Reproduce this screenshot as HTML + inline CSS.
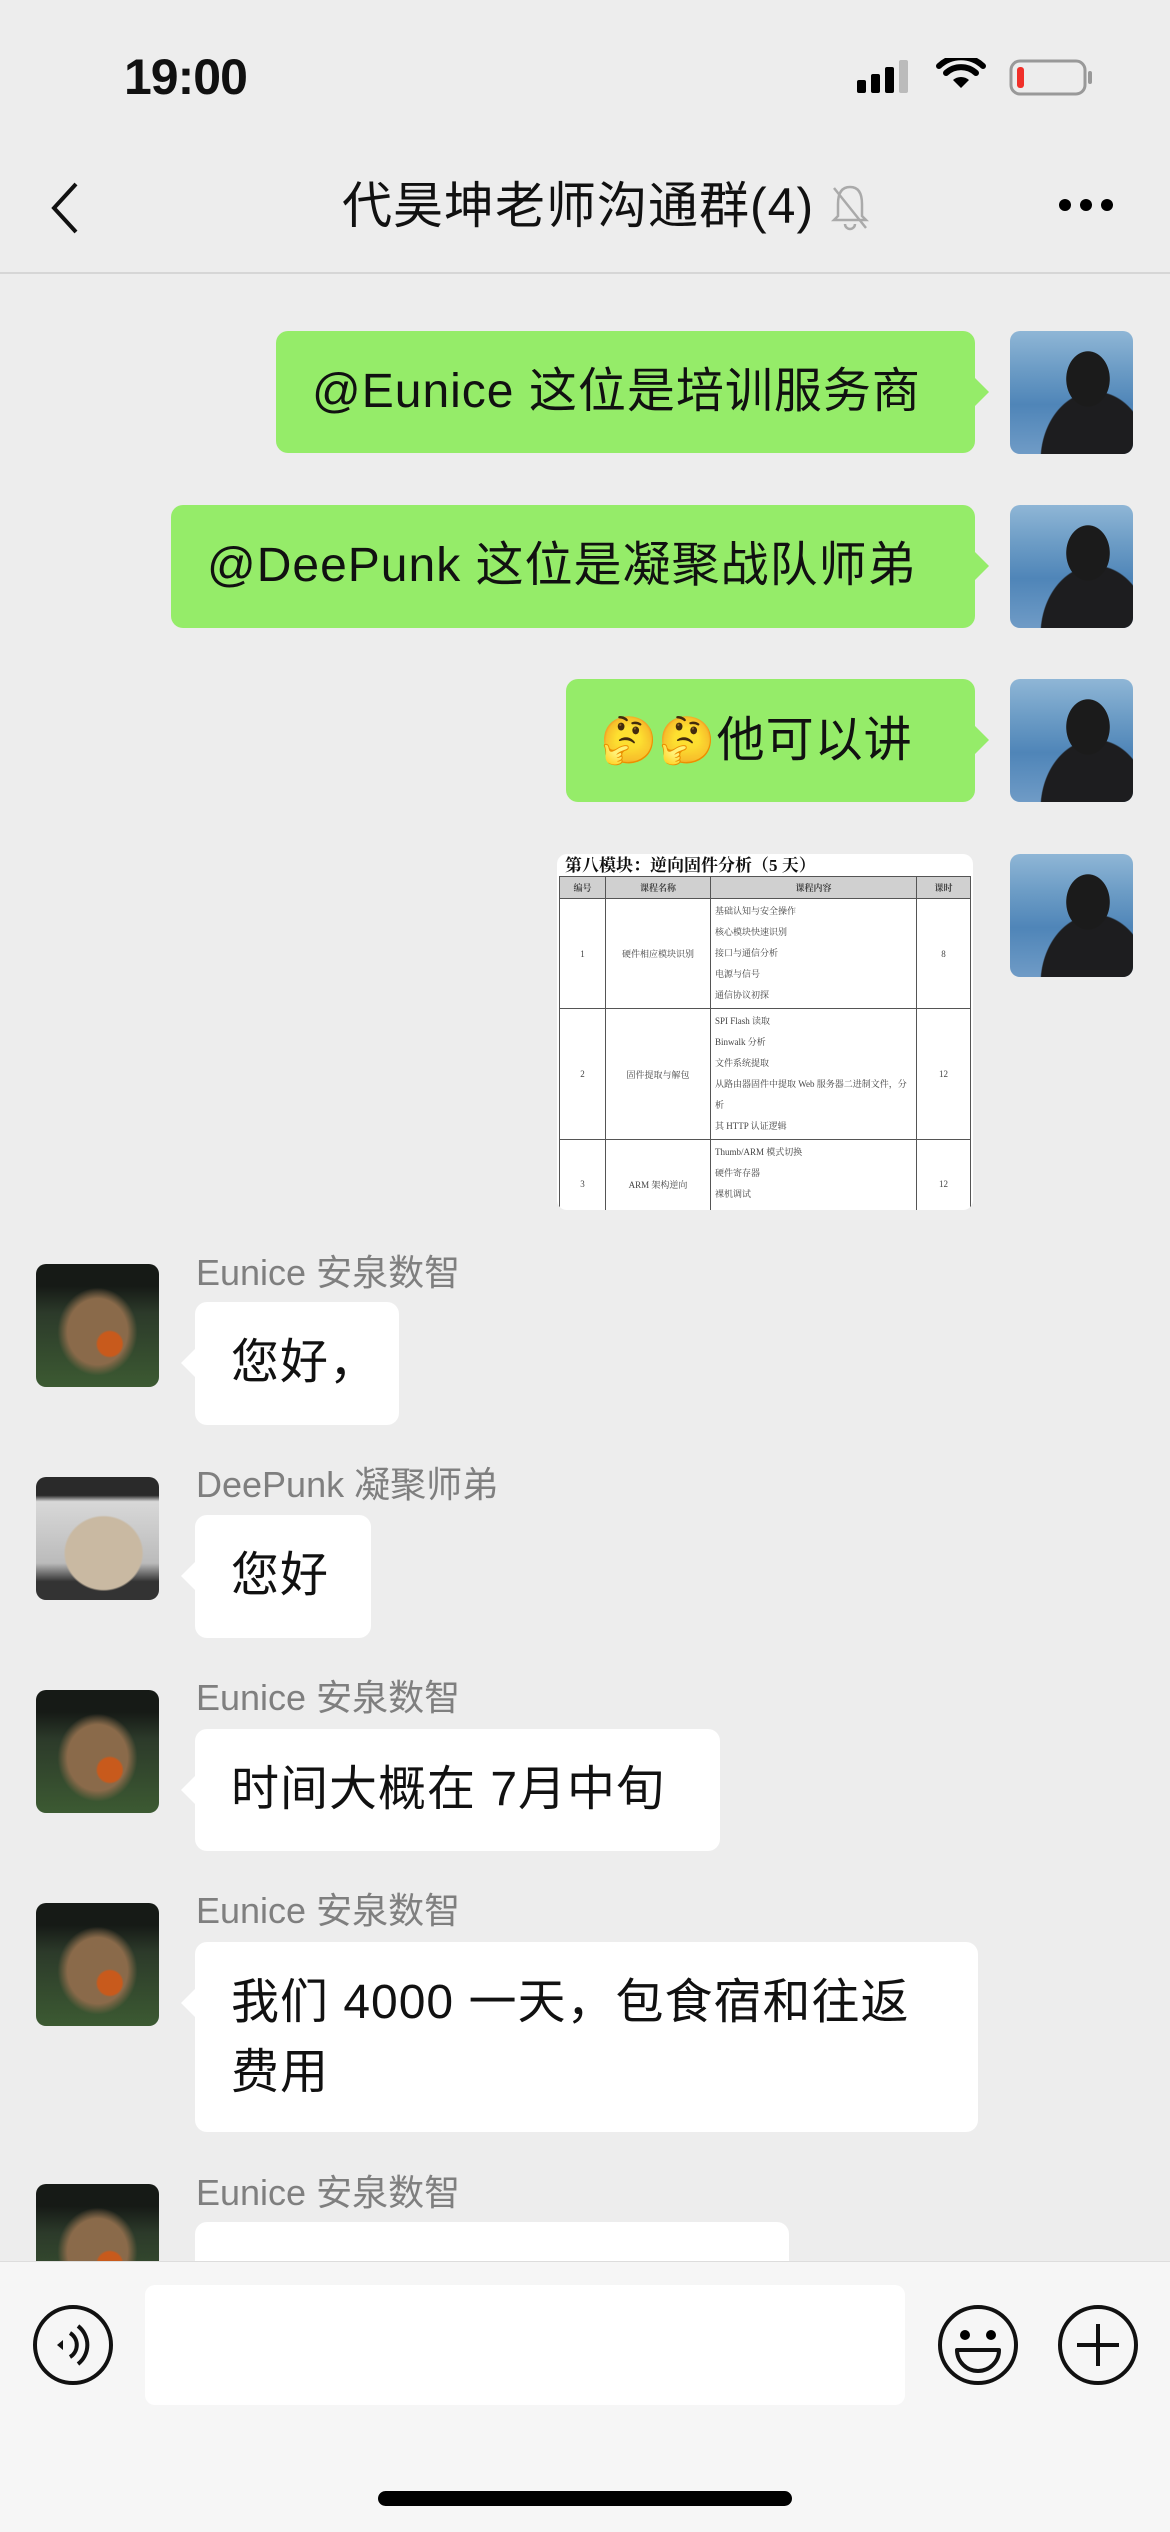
<!DOCTYPE html>
<html><head><meta charset="utf-8"><style>
*{margin:0;padding:0;box-sizing:border-box}
body{width:1170px;height:2532px;background:#ededed;font-family:"Liberation Sans","Noto Sans CJK SC",sans-serif;position:relative;overflow:hidden;color:#111}
.abs{position:absolute}
.b{position:absolute;border-radius:12px;font-size:48px;line-height:70px;padding:26px 36px 26px 36px;white-space:nowrap;letter-spacing:1px}
.g{background:#95ec69}
.w{background:#fff}
.g:after{content:"";position:absolute;right:-14px;top:47px;border:14px solid transparent;border-right:0;border-left-color:#95ec69}
.w:before{content:"";position:absolute;left:-14px;top:47px;border:14px solid transparent;border-left:0;border-right-color:#fff}
.me{position:absolute;left:1010px;width:123px;height:123px;border-radius:10px;overflow:hidden;background:linear-gradient(180deg,#8fb6d6 0%,#6d9dc6 30%,#4f85b8 60%,#6f9bc6 100%)}
.me:after{content:"";position:absolute;left:30px;top:20px;width:95px;height:110px;background:radial-gradient(ellipse 22px 28px at 48px 28px,#1b1b1b 98%,transparent 100%),radial-gradient(ellipse 55px 70px at 55px 110px,#1d1d1f 98%,transparent 100%)}
.eu{position:absolute;left:36px;width:123px;height:123px;border-radius:10px;overflow:hidden;background:radial-gradient(circle at 60% 65%,#c85a1c 0 12px,transparent 14px),radial-gradient(ellipse at 50% 55%,#8a6a4a 0 30px,transparent 40px),linear-gradient(180deg,#161a16 0 18%,#2c3a2a 40%,#3c5a32 100%)}
.cat{position:absolute;left:36px;width:123px;height:123px;border-radius:10px;overflow:hidden;background:radial-gradient(ellipse 40px 38px at 55% 62%,#c9b9a2 95%,transparent 100%),linear-gradient(180deg,#2a2a2a 0 15%,#d8d8d8 20%,#bbb 70%,#333 85%)}
.nm{position:absolute;left:196px;font-size:36px;color:#7f7f7f;line-height:40px}
table{border-collapse:collapse;font-size:9px;color:#444;font-family:"Liberation Serif","Noto Serif CJK SC",serif}
td,th{border:1px solid #555;padding:2px 4px;text-align:center}
th{background:#d0d0d0;height:22px}
td.l{text-align:left;line-height:21px}
</style></head><body>
<div class="abs" style="left:124px;top:48px;font-size:50px;font-weight:bold;letter-spacing:-1px">19:00</div>
<svg class="abs" style="left:855px;top:58px" width="240" height="40">
<rect x="2" y="22" width="9" height="13" rx="2"/><rect x="16" y="16" width="9" height="19" rx="2"/><rect x="30" y="9" width="9" height="26" rx="2"/><rect x="44" y="2" width="9" height="33" rx="2" fill="#bbb"/>
<path d="M106 30 L98 22 A12 12 0 0 1 114 22 Z" /><path d="M91 15 A22 22 0 0 1 121 15" stroke="#000" stroke-width="6" fill="none" stroke-linecap="round"/><path d="M84 8 A32 32 0 0 1 128 8" stroke="#000" stroke-width="6" fill="none" stroke-linecap="round"/>
<rect x="156" y="3" width="74" height="33" rx="9" fill="none" stroke="#999" stroke-width="3"/><rect x="162" y="9" width="7" height="21" rx="3" fill="#f0302a"/><rect x="233" y="13" width="4" height="13" rx="2" fill="#999"/>
</svg>
<svg class="abs" style="left:46px;top:180px" width="40" height="56"><path d="M30 4 L8 28 L30 52" stroke="#111" stroke-width="4" fill="none"/></svg>
<div class="abs" style="left:342px;top:176px;font-size:50px;line-height:60px;letter-spacing:1px">代昊坤老师沟通群(4)</div>
<svg class="abs" style="left:830px;top:182px" width="40" height="50"><path d="M20 5 C10 5 8 14 8 22 L8 34 L4 38 L36 38 L32 34 L32 22 C32 14 30 5 20 5 Z M15 42 A5 5 0 0 0 25 42 M4 6 L36 46" stroke="#aaa" stroke-width="2.5" fill="none"/></svg>
<svg class="abs" style="left:1058px;top:197px" width="56" height="16"><circle cx="7" cy="8" r="6"/><circle cx="28" cy="8" r="6"/><circle cx="49" cy="8" r="6"/></svg>
<div class="abs" style="left:0;top:272px;width:1170px;height:2px;background:#d6d6d6"></div>

<div class="b g" style="left:276px;top:331px;width:699px;height:122px">@Eunice 这位是培训服务商</div>
<div class="me" style="top:331px"></div>
<div class="b g" style="left:171px;top:505px;width:804px;height:123px">@DeePunk 这位是凝聚战队师弟</div>
<div class="me" style="top:505px"></div>
<div class="b g" style="left:566px;top:679px;width:409px;height:123px;padding-left:34px"><span style="font-size:46px">🤔🤔</span>他可以讲</div>
<div class="me" style="top:679px"></div>

<div class="abs" style="left:557px;top:854px;width:416px;height:356px;background:#fff;border-radius:10px;overflow:hidden">
<div style="font-size:17px;font-weight:bold;padding:2px 8px;font-family:'Liberation Serif','Noto Serif CJK SC',serif;height:22px;line-height:20px">第八模块：逆向固件分析（5 天）</div>
<table style="width:412px;margin-left:2px">
<tr><th style="width:46px">编号</th><th style="width:105px">课程名称</th><th>课程内容</th><th style="width:54px">课时</th></tr>
<tr><td>1</td><td>硬件相应模块识别</td><td class="l">基础认知与安全操作<br>核心模块快速识别<br>接口与通信分析<br>电源与信号<br>通信协议初探</td><td>8</td></tr>
<tr><td>2</td><td>固件提取与解包</td><td class="l">SPI Flash 读取<br>Binwalk 分析<br>文件系统提取<br>从路由器固件中提取 Web 服务器二进制文件，分析<br>其 HTTP 认证逻辑</td><td>12</td></tr>
<tr><td>3</td><td>ARM 架构逆向</td><td class="l">Thumb/ARM 模式切换<br>硬件寄存器<br>裸机调试<br>逆向智能插座固件，定位其 MQTT 通信密钥</td><td>12</td></tr>
</table></div>
<div class="me" style="top:854px"></div>

<div class="nm" style="top:1253px">Eunice 安泉数智</div>
<div class="eu" style="top:1264px"></div>
<div class="b w" style="left:195px;top:1302px;width:204px;height:123px">您好，</div>

<div class="nm" style="top:1465px">DeePunk 凝聚师弟</div>
<div class="cat" style="top:1477px"></div>
<div class="b w" style="left:195px;top:1515px;width:176px;height:123px">您好</div>

<div class="nm" style="top:1678px">Eunice 安泉数智</div>
<div class="eu" style="top:1690px"></div>
<div class="b w" style="left:195px;top:1729px;width:525px;height:122px">时间大概在 7月中旬</div>

<div class="nm" style="top:1891px">Eunice 安泉数智</div>
<div class="eu" style="top:1903px"></div>
<div class="b w" style="left:195px;top:1942px;width:783px;height:190px">我们 4000 一天，包食宿和往返<br>费用</div>

<div class="nm" style="top:2173px">Eunice 安泉数智</div>
<div class="eu" style="top:2184px"></div>
<div class="b w" style="left:195px;top:2222px;width:594px;height:123px"></div>

<div class="abs" style="left:0;top:2261px;width:1170px;height:271px;background:#f6f6f6;border-top:1px solid #ddd"></div>
<div class="abs" style="left:145px;top:2285px;width:760px;height:120px;background:#fff;border-radius:10px"></div>
<svg class="abs" style="left:30px;top:2300px" width="90" height="90"><circle cx="43" cy="45" r="38" stroke="#111" stroke-width="4" fill="none"/><path d="M33 40 L27 45 L33 50 Z" fill="#111"/><path d="M40 33 A14 14 0 0 1 40 57" stroke="#111" stroke-width="4" fill="none"/><path d="M48 26 A24 24 0 0 1 48 64" stroke="#111" stroke-width="4" fill="none"/></svg>
<svg class="abs" style="left:935px;top:2300px" width="90" height="90"><circle cx="43" cy="45" r="38" stroke="#111" stroke-width="4" fill="none"/><circle cx="30" cy="35" r="5"/><circle cx="56" cy="35" r="5"/><path d="M22 50 L64 50 A21 21 0 0 1 22 50 Z" stroke="#111" stroke-width="4" fill="none" stroke-linejoin="round"/></svg>
<svg class="abs" style="left:1055px;top:2300px" width="90" height="90"><circle cx="43" cy="45" r="38" stroke="#111" stroke-width="4" fill="none"/><path d="M43 24 L43 66 M22 45 L64 45" stroke="#111" stroke-width="4"/></svg>
<div class="abs" style="left:378px;top:2491px;width:414px;height:15px;background:#000;border-radius:8px"></div>
</body></html>
